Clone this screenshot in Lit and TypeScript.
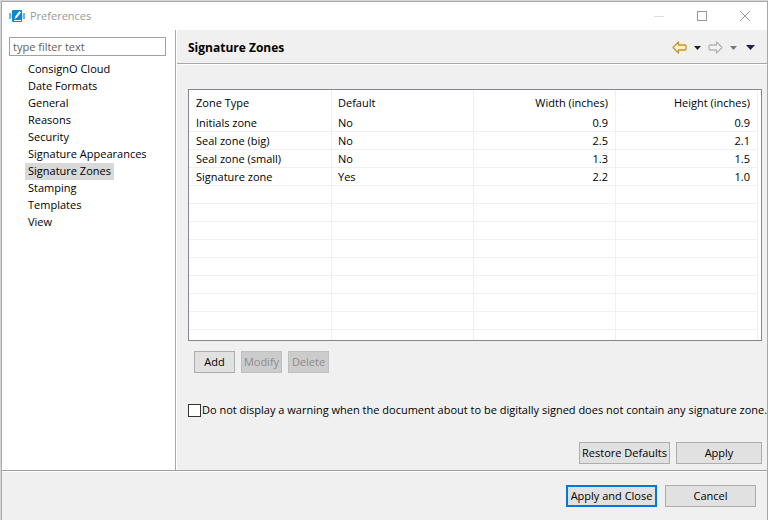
import { LitElement, html, css, svg } from "lit";
import { customElement, state } from "lit/decorators.js";
import { classMap } from "lit/directives/class-map.js";

interface Zone {
  type: string;
  isDefault: boolean;
  width: string;
  height: string;
}

const PAGES = [
  "ConsignO Cloud",
  "Date Formats",
  "General",
  "Reasons",
  "Security",
  "Signature Appearances",
  "Signature Zones",
  "Stamping",
  "Templates",
  "View",
];

const ZONES: Zone[] = [
  { type: "Initials zone", isDefault: false, width: "0.9", height: "0.9" },
  { type: "Seal zone (big)", isDefault: false, width: "2.5", height: "2.1" },
  { type: "Seal zone (small)", isDefault: false, width: "1.3", height: "1.5" },
  { type: "Signature zone", isDefault: true, width: "2.2", height: "1.0" },
];

const BLANK_ROWS = Array.from({ length: 9 });

const arrow = svg`<path d="M1 6.5 L6.5 1 V4 H13 Q14 4 14 5 V8 Q14 9 13 9 H6.5 V12 Z" stroke-width="1.3" stroke-linejoin="round" />`;

@customElement("app-root")
export class AppRoot extends LitElement {
  @state() private page = "Signature Zones";

  static styles = css`
    :host {
      display: block;
      min-height: 100vh;
      box-sizing: border-box;
      padding: 1px 0 0 1px;
      background: #d6d6d6;
      font: 11px/16px "Open Sans", "Noto Sans", sans-serif;
      color: #000;
    }
    * {
      box-sizing: border-box;
    }
    button,
    input {
      font: inherit;
      color: inherit;
      margin: 0;
    }
    .window {
      display: flex;
      flex-direction: column;
      min-height: calc(100vh - 1px);
      border: 1px solid #a8a8a8;
      border-bottom: 0;
      background: #f0f0f0;
    }
    .titlebar {
      display: flex;
      align-items: center;
      height: 28px;
      padding: 0 1px 0 7px;
      background: #fff;
      color: #999;
    }
    .logo {
      width: 16px;
      height: 16px;
      margin-right: 5px;
    }
    .caption {
      flex: 1;
      font-size: 11px;
      font-weight: 400;
      margin: 0;
    }
    .win-button {
      display: flex;
      align-items: center;
      justify-content: center;
      width: 43px;
      height: 28px;
      padding: 0;
      border: 0;
      background: none;
    }
    .body {
      flex: 1;
      display: flex;
    }
    .sidebar {
      width: 174px;
      padding: 7px 9px 0 7px;
      background: #fff;
      border-right: 1px solid #a8a8a8;
    }
    .filter {
      display: block;
      width: 100%;
      height: 19px;
      padding: 0 3px;
      border: 1px solid #a0a0a8;
      background: #fff;
    }
    .filter::placeholder {
      color: #606060;
      opacity: 1;
    }
    .pages {
      list-style: none;
      margin: 5px 0 0;
      padding: 0 0 0 16px;
    }
    .pages li {
      display: flex;
    }
    .page {
      height: 17px;
      padding: 0 3px;
      line-height: 16px;
      color: inherit;
      text-decoration: none;
      white-space: nowrap;
    }
    .page.selected {
      background: #d9d9d9;
    }
    .content {
      flex: 1;
      min-width: 0;
      display: flex;
      flex-direction: column;
      border-left: 1px solid #fff;
    }
    .header {
      display: flex;
      align-items: center;
      height: 34px;
      padding: 2px 12px 0 11px;
      border-bottom: 1px solid #a8a8a8;
      box-shadow: 0 1px #fff;
    }
    .title {
      flex: 1;
      margin: 0;
      font-size: 12px;
      font-weight: 700;
    }
    .tool {
      display: flex;
      align-items: center;
      padding: 0;
      border: 0;
      background: none;
    }
    .tool + .tool {
      margin-left: 7px;
    }
    .tool + .menu {
      margin-left: 9px;
    }
    .panel {
      flex: 1;
      display: flex;
      flex-direction: column;
      padding: 25px 5px 6px 11px;
    }
    .grid {
      height: 252px;
      padding-right: 3px;
      border: 1px solid #828790;
      background: #fff;
      overflow: hidden;
    }
    .zones {
      width: 100%;
      height: 250px;
      table-layout: fixed;
      border-collapse: separate;
      border-spacing: 0;
    }
    .zones th,
    .zones td {
      height: 18px;
      padding: 1px 7px 0;
      border-right: 1px solid #eaf1f8;
      border-bottom: 1px solid #f0f0f0;
      font-weight: 400;
      line-height: 16px;
      text-align: left;
    }
    .zones th {
      width: 142px;
      height: 24px;
      border-bottom: 0;
    }
    .zones th:first-child {
      width: auto;
    }
    .zones th:not(.number):not(:first-child),
    .zones td:nth-child(2) {
      padding-left: 6px;
    }
    .zones .number {
      text-align: right;
    }
    .zones tr:last-child td {
      border-bottom: 0;
    }
    .actions {
      display: flex;
      gap: 6px;
      margin: 10px 0 0 6px;
    }
    .button {
      height: 22px;
      padding: 0;
      border: 1px solid #adadad;
      background: #e1e1e1;
      text-align: center;
      white-space: nowrap;
    }
    .button:disabled {
      border-color: #bfbfbf;
      background: #ccc;
      color: #8c8c8c;
    }
    .small {
      width: 41px;
    }
    .medium {
      width: 86px;
    }
    .large {
      width: 91px;
    }
    .primary {
      border: 2px solid #0078d7;
    }
    .option {
      display: flex;
      align-items: center;
      gap: 1px;
      margin-top: 29px;
      white-space: nowrap;
    }
    .check {
      appearance: none;
      flex: none;
      width: 13px;
      height: 13px;
      border: 1px solid #333;
      background: #fff;
    }
    .check:checked {
      background: #333;
    }
    .page-actions {
      display: flex;
      justify-content: flex-end;
      gap: 6px;
      margin-top: auto;
    }
    .footer {
      display: flex;
      justify-content: flex-end;
      gap: 8px;
      height: 50px;
      padding: 14px 11px 0;
      border-top: 1px solid #a0a0a0;
      box-shadow: inset 0 1px #fff;
    }
  `;

  private select(event: Event, name: string) {
    event.preventDefault();
    this.page = name;
  }

  render() {
    return html`
      <div class="window">
        <header class="titlebar">
          <svg class="logo" viewBox="0 0 16 16" aria-hidden="true">
            <path d="M0 5h2v6H0zM14 5h2v6h-2z" fill="#64b9ea" />
            <path d="M2 6h1v4H2zM13 6h1v4h-1z" fill="#b5dcf4" />
            <rect x="3" y="2" width="10" height="12" rx="1" fill="#0b86d0" />
            <path d="M5.5 11 L6.5 8 L10.5 3 L12 4.5 L8 9.5 Z" fill="#fff" />
            <path d="M5 12.5h7" stroke="#fff" />
          </svg>
          <h1 class="caption">Preferences</h1>
          <button class="win-button" aria-label="Minimize">
            <svg width="10" height="10"><path d="M0 5.5h10" stroke="#ddd" /></svg>
          </button>
          <button class="win-button" aria-label="Maximize">
            <svg width="10" height="10"><rect x=".5" y=".5" width="9" height="9" fill="none" stroke="#999" /></svg>
          </button>
          <button class="win-button" aria-label="Close">
            <svg width="10" height="10"><path d="M0 0 10 10M10 0 0 10" stroke="#999" /></svg>
          </button>
        </header>
        <div class="body">
          <nav class="sidebar">
            <input class="filter" type="text" placeholder="type filter text" aria-label="Filter" />
            <ul class="pages">
              ${PAGES.map(
                (name) => html`<li>
                  <a
                    href="#"
                    class=${classMap({ page: true, selected: name === this.page })}
                    @click=${(e: Event) => this.select(e, name)}
                    >${name}</a
                  >
                </li>`
              )}
            </ul>
          </nav>
          <main class="content">
            <div class="header">
              <h2 class="title">${this.page}</h2>
              <button class="tool" aria-label="Back">
                <svg width="15" height="13" fill="#fff3c4" stroke="#c8922a">${arrow}</svg>
              </button>
              <button class="tool" aria-label="Back history">
                <svg width="7" height="4"><path d="M0 0h7L3.5 4z" fill="#222" /></svg>
              </button>
              <button class="tool" aria-label="Forward">
                <svg width="15" height="13" fill="#f4f4f4" stroke="#b4b4b4">
                  <g transform="matrix(-1 0 0 1 15 0)">${arrow}</g>
                </svg>
              </button>
              <button class="tool" aria-label="Forward history">
                <svg width="7" height="4"><path d="M0 0h7L3.5 4z" fill="#777" /></svg>
              </button>
              <button class="tool menu" aria-label="View menu">
                <svg width="9" height="5"><path d="M0 0h9L4.5 5z" fill="#2a1a50" /></svg>
              </button>
            </div>
            <div class="panel">
              <div class="grid">
                <table class="zones">
                  <thead>
                    <tr>
                      <th scope="col">Zone Type</th>
                      <th scope="col">Default</th>
                      <th scope="col" class="number">Width (inches)</th>
                      <th scope="col" class="number">Height (inches)</th>
                    </tr>
                  </thead>
                  <tbody>
                    ${ZONES.map(
                      (z) => html`<tr>
                        <td>${z.type}</td>
                        <td>${z.isDefault ? "Yes" : "No"}</td>
                        <td class="number">${z.width}</td>
                        <td class="number">${z.height}</td>
                      </tr>`
                    )}
                    ${BLANK_ROWS.map(() => html`<tr><td></td><td></td><td></td><td></td></tr>`)}
                  </tbody>
                </table>
              </div>
              <div class="actions">
                <button class="button small">Add</button>
                <button class="button small" disabled>Modify</button>
                <button class="button small" disabled>Delete</button>
              </div>
              <label class="option">
                <input class="check" type="checkbox" />
                Do not display a warning when the document about to be digitally signed does not contain any signature zone.
              </label>
              <div class="page-actions">
                <button class="button large">Restore Defaults</button>
                <button class="button medium">Apply</button>
              </div>
            </div>
          </main>
        </div>
        <footer class="footer">
          <button class="button large primary">Apply and Close</button>
          <button class="button large">Cancel</button>
        </footer>
      </div>
    `;
  }
}
